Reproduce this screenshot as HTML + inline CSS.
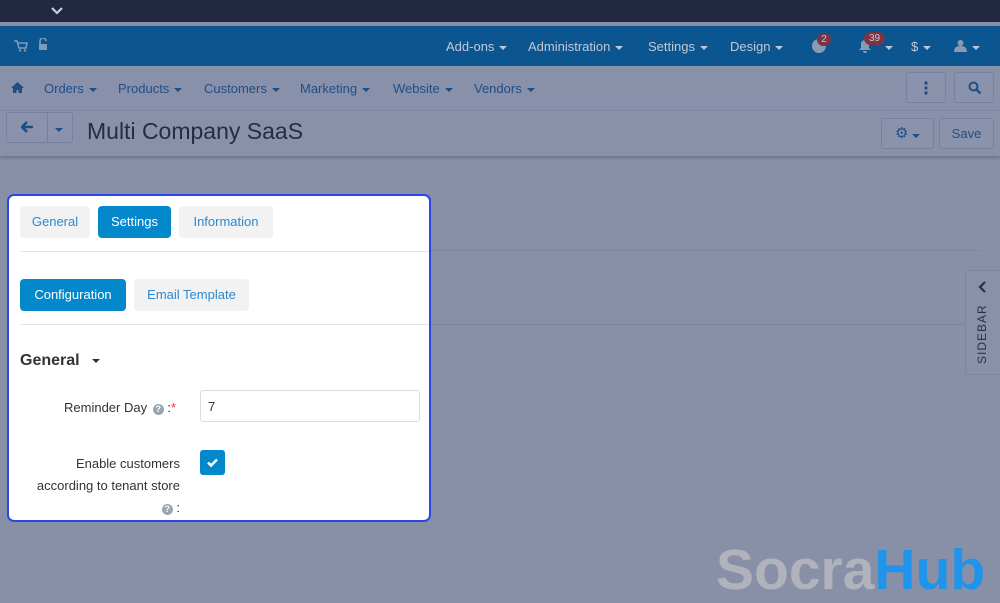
<!DOCTYPE html>
<html><head><style>
*{box-sizing:border-box;margin:0;padding:0}
body{width:1000px;height:600px;overflow:hidden;background:#8890a7;font-family:"Liberation Sans",sans-serif;position:relative}
.a{position:absolute}
.top{left:0;top:0;width:1000px;height:22px;background:#222840}
.blue{left:0;top:26px;width:1000px;height:40px;background:#0b5690}
.nav{left:0;top:66px;width:1000px;height:44px;background:#8990aa}
.hd{left:0;top:110px;width:1000px;height:46px;background:#8990aa;border-top:1px solid #8089a3;box-shadow:0 2px 3px rgba(60,70,90,.4)}
.t{font-size:13px;color:#c2c8d8;white-space:nowrap}
.n{font-size:13px;color:#1e4e86;white-space:nowrap}
.car{display:inline-block;border-left:4px solid transparent;border-right:4px solid transparent;border-top:4px solid currentColor;vertical-align:middle;margin-left:5px}
.btn{border:1px solid #7880a0;border-radius:3px;background:#8b93ac}
.panel{left:7px;top:194px;width:424px;height:328px;background:#fff;border:2px solid #2b45e8;border-radius:7px;overflow:hidden}
.tab{position:absolute;height:32px;border-radius:4px;background:#f2f2f2;color:#2a8ad0;font-size:13px;line-height:32px;text-align:center}
.on{background:#0388cc;color:#fff}
.hr{position:absolute;left:12px;height:1px;background:#e1e5ea}
</style></head><body>
<div class="a top"></div>
<svg class="a" style="left:51px;top:6px" width="12" height="9"><path d="M1 2l5 5 5-5" stroke="#c9cdd8" stroke-width="2.2" fill="none"/></svg>
<div class="a blue"></div>
<svg class="a" style="left:14px;top:40px" width="14" height="12"><path d="M0 1h3l2 7h7l1-5H4" stroke="#7f9ab8" stroke-width="1.6" fill="none"/><circle cx="6" cy="10.5" r="1.2" fill="#7f9ab8"/><circle cx="11" cy="10.5" r="1.2" fill="#7f9ab8"/></svg>
<svg class="a" style="left:38px;top:38px" width="10" height="13"><path d="M2 6V3a3 3 0 0 1 6 0" stroke="#7f9ab8" stroke-width="1.6" fill="none"/><rect x="1" y="6" width="8" height="6" fill="#7f9ab8"/></svg>
<div class="a t" style="left:446px;top:39px">Add-ons<span class="car"></span></div>
<div class="a t" style="left:528px;top:39px">Administration<span class="car"></span></div>
<div class="a t" style="left:648px;top:39px">Settings<span class="car"></span></div>
<div class="a t" style="left:730px;top:39px">Design<span class="car"></span></div>
<div class="a" style="left:812px;top:39px;width:14px;height:14px;border-radius:50%;background:#8a9ab0"></div>
<div class="a" style="left:817px;top:33px;width:14px;height:13px;border-radius:7px;background:#7a3448;color:#c8c8d0;font-size:10px;text-align:center;line-height:13px">2</div>
<svg class="a" style="left:858px;top:39px" width="14" height="14"><path d="M7 1a4 4 0 0 0-4 4v4L1 11h12l-2-2V5a4 4 0 0 0-4-4zM5 12a2 2 0 0 0 4 0z" fill="#8a9ab0"/></svg>
<div class="a" style="left:864px;top:32px;width:21px;height:13px;border-radius:7px;background:#7a3448;color:#c8c8d0;font-size:10px;text-align:center;line-height:13px">39</div>
<div class="a t" style="left:880px;top:39px"><span class="car"></span></div>
<div class="a t" style="left:911px;top:39px">$<span class="car"></span></div>
<svg class="a" style="left:954px;top:39px" width="13" height="13"><circle cx="6.5" cy="4" r="3" fill="#8a9ab0"/><path d="M0 13c0-5 3-6 6.5-6S13 8 13 13z" fill="#8a9ab0"/></svg>
<div class="a t" style="left:967px;top:39px"><span class="car"></span></div>
<div class="a nav"></div>
<svg class="a" style="left:11px;top:82px" width="13" height="11"><path d="M6.5 0L0 6h2v5h3.5V8h2v3H11V6h2z" fill="#1e4e86"/></svg>
<div class="a n" style="left:44px;top:81px">Orders<span class="car"></span></div>
<div class="a n" style="left:118px;top:81px">Products<span class="car"></span></div>
<div class="a n" style="left:204px;top:81px">Customers<span class="car"></span></div>
<div class="a n" style="left:300px;top:81px">Marketing<span class="car"></span></div>
<div class="a n" style="left:393px;top:81px">Website<span class="car"></span></div>
<div class="a n" style="left:474px;top:81px">Vendors<span class="car"></span></div>
<div class="a btn" style="left:906px;top:72px;width:40px;height:31px"><svg style="margin:8px 0 0 17px" width="4" height="14"><circle cx="2" cy="2" r="1.6" fill="#1e4e86"/><circle cx="2" cy="7" r="1.6" fill="#1e4e86"/><circle cx="2" cy="12" r="1.6" fill="#1e4e86"/></svg></div>
<div class="a btn" style="left:954px;top:72px;width:40px;height:31px"><svg style="margin:8px 0 0 13px" width="14" height="14"><circle cx="5.5" cy="5.5" r="4" stroke="#1e4e86" stroke-width="2" fill="none"/><path d="M8.5 8.5l4 4" stroke="#1e4e86" stroke-width="2.4"/></svg></div>
<div class="a hd"></div>
<div class="a btn" style="left:6px;top:112px;width:67px;height:31px"></div>
<div class="a" style="left:47px;top:112px;width:1px;height:31px;background:#7880a0"></div>
<svg class="a" style="left:21px;top:121px" width="13" height="12"><path d="M6 1L1 6l5 5M1 6h11" stroke="#1e4e86" stroke-width="2.6" fill="none"/></svg>
<div class="a n" style="left:51px;top:121px"><span class="car" style="margin-left:4px"></span></div>
<div class="a" style="left:87px;top:118px;font-size:23px;color:#252c44">Multi Company SaaS</div>
<div class="a btn" style="left:881px;top:118px;width:53px;height:31px"><span style="position:absolute;left:13px;top:5px;color:#1e4e86;font-size:15px">&#9881;</span><span class="n" style="position:absolute;left:25px;top:8px"><span class="car"></span></span></div>
<div class="a btn" style="left:939px;top:118px;width:55px;height:31px;color:#1e4e86;font-size:13px;text-align:center;line-height:29px">Save</div>
<div class="a" style="left:430px;top:250px;width:550px;height:1px;background:#7c86a2"></div>
<div class="a" style="left:430px;top:324px;width:535px;height:1px;background:#7c86a2"></div>
<div class="a" style="left:965px;top:270px;width:40px;height:105px;border:1px solid #7c84a0;border-radius:3px 0 0 3px;background:#8990aa"></div>
<svg class="a" style="left:978px;top:281px" width="9" height="12"><path d="M7 1L2 6l5 5" stroke="#2a3048" stroke-width="2.2" fill="none"/></svg>
<div class="a" style="left:975px;top:364px;transform:rotate(-90deg);transform-origin:0 0;font-size:12px;letter-spacing:1px;color:#2a3048">SIDEBAR</div>
<div class="a" style="left:716px;top:537px;font-size:57px;font-weight:bold;line-height:66px;color:#b0b3bc;font-family:'Liberation Sans',sans-serif">Socra<span style="color:#1f94ea">Hub</span></div>
<div class="a panel">
<div class="tab" style="left:11px;top:10px;width:70px">General</div>
<div class="tab on" style="left:89px;top:10px;width:73px">Settings</div>
<div class="tab" style="left:170px;top:10px;width:94px">Information</div>
<div class="hr" style="top:55px;width:410px"></div>
<div class="tab on" style="left:11px;top:83px;width:106px">Configuration</div>
<div class="tab" style="left:125px;top:83px;width:115px">Email Template</div>
<div class="hr" style="top:128px;width:410px"></div>
<div style="position:absolute;left:11px;top:156px;font-size:16px;font-weight:bold;color:#333">General<span class="car" style="margin-left:12px;color:#333"></span></div>
<div style="position:absolute;left:55px;top:204px;font-size:13px;color:#333">Reminder Day <span style="display:inline-block;width:11px;height:11px;border-radius:50%;background:#9aa5b1;color:#fff;font-size:9px;line-height:11px;text-align:center;font-weight:bold;margin-left:2px">?</span> :<span style="color:#e33">*</span></div>
<div style="position:absolute;left:191px;top:194px;width:220px;height:32px;border:1px solid #d8dde3;border-radius:3px;font-size:13px;color:#333;padding:8px 7px">7</div>
<div style="position:absolute;left:15px;top:257px;width:156px;text-align:right;font-size:13px;color:#333;line-height:22px">Enable customers<br><span style="margin-left:-20px">according to tenant store</span><br><span style="display:inline-block;width:11px;height:11px;border-radius:50%;background:#9aa5b1;color:#fff;font-size:9px;line-height:11px;text-align:center;font-weight:bold">?</span> :</div>
<div style="position:absolute;left:191px;top:254px;width:25px;height:25px;border-radius:3px;background:#0388cc"><svg width="25" height="25"><path d="M8 12.5l3 3 6-6" stroke="#fff" stroke-width="2.6" fill="none"/></svg></div>
</div>
</body></html>
